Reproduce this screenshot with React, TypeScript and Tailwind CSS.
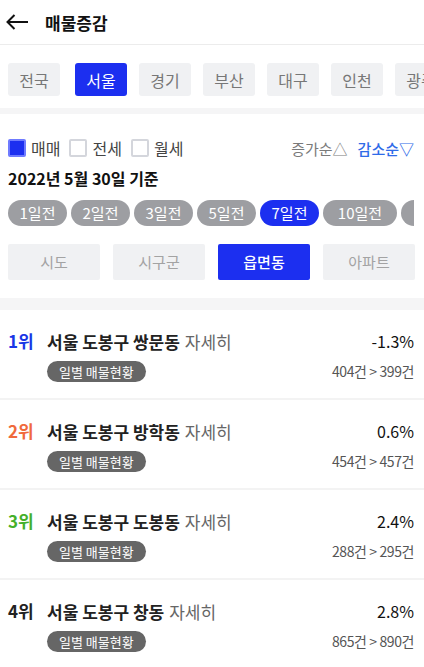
import React from "react";

const regions = ["전국", "서울", "경기", "부산", "대구", "인천", "광주"];
const days = ["1일전", "2일전", "3일전", "5일전", "7일전", "10일전", "14일전"];
const levels = ["시도", "시구군", "읍면동", "아파트"];

const items = [
  { rank: "1위", color: "text-[#1a37e6]", name: "서울 도봉구 쌍문동", pct: "-1.3%", cnt: "404건 > 399건" },
  { rank: "2위", color: "text-[#f06a3c]", name: "서울 도봉구 방학동", pct: "0.6%", cnt: "454건 > 457건" },
  { rank: "3위", color: "text-[#45b02b]", name: "서울 도봉구 도봉동", pct: "2.4%", cnt: "288건 > 295건" },
  { rank: "4위", color: "text-[#222222]", name: "서울 도봉구 창동", pct: "2.8%", cnt: "865건 > 890건" },
];

function Check({ checked, label }: { checked?: boolean; label: string }) {
  return (
    <div className="flex items-center gap-[5px]">
      <div
        className={
          checked
            ? "w-[18px] h-[18px] bg-[#1c2ff0] border-2 border-[#6f7bff] rounded-[2px]"
            : "w-[18px] h-[18px] bg-white border-2 border-[#d4d6dc] rounded-[2px]"
        }
      />
      <span className="text-[16px] text-[#444] leading-none">{label}</span>
    </div>
  );
}

export default function App() {
  return (
    <div
      className="w-[424px] h-[667px] overflow-hidden bg-white"
      style={{ fontFamily: '"Noto Sans CJK KR", "Noto Sans", sans-serif' }}
    >
      {/* header */}
      <div className="h-[45px] flex items-center border-b border-[#ececec]">
        <svg className="ml-[6px]" width="23" height="16" viewBox="0 0 23 16" fill="none">
          <path d="M22 8H1.5M8.5 1L1.5 8L8.5 15" stroke="#111" strokeWidth="2" />
        </svg>
        <span className="ml-[16px] text-[17px] font-bold text-[#111] leading-none">매물증감</span>
      </div>

      {/* regions */}
      <div className="pt-[18px] pb-[12px] pl-[8px] flex gap-[12px] overflow-hidden">
        {regions.map((r, i) => (
          <div
            key={r}
            className={
              (i === 0 ? "mr-[3px] " : "") +
              (i === 1
                ? "shrink-0 w-[52px] h-[33px] flex items-center justify-center rounded-[3px] bg-[#1c2ff0] text-white text-[16px]"
                : "shrink-0 w-[52px] h-[33px] flex items-center justify-center rounded-[3px] bg-[#f0f1f3] text-[#777] text-[16px]")
            }
          >
            {r}
          </div>
        ))}
      </div>
      <div className="h-[6px] bg-[#f5f5f6]" />

      {/* filters */}
      <div className="pt-[25px] pb-[18px]">
        <div className="flex items-center justify-between pl-[8px] pr-[10px] h-[18px]">
          <div className="flex items-center gap-[9px]">
            <Check checked label="매매" />
            <Check label="전세" />
            <Check label="월세" />
          </div>
          <div className="flex items-center gap-[10px] text-[15px] leading-none">
            <span className="text-[#7a7a7a]">증가순△</span>
            <span className="text-[#2f6be8] font-medium">감소순▽</span>
          </div>
        </div>
        <div className="mt-[10px] pl-[8px] h-[22px] flex items-center text-[16px] font-bold text-[#111]">
          2022년 5월 30일 기준
        </div>
        <div className="mt-[11px] ml-[8px] w-[406px] overflow-hidden flex gap-[4px]">
          {days.map((d, i) => (
            <div
              key={d}
              className={
                (i === 5 ? "w-[74px] " : i === 6 ? "w-[84px] " : "w-[59px] ") +
                (i === 4
                  ? "shrink-0 h-[26px] rounded-full bg-[#1c2ff0] text-white text-[15px] flex items-center justify-center"
                  : "shrink-0 h-[26px] rounded-full bg-[#9d9ea2] text-white text-[15px] flex items-center justify-center")
              }
            >
              {d}
            </div>
          ))}
        </div>
        <div className="mt-[18px] pl-[8px] pr-[9px] grid grid-cols-4 gap-[13px]">
          {levels.map((l, i) => (
            <div
              key={l}
              className={
                i === 2
                  ? "h-[36px] rounded-[2px] bg-[#1c2ff0] text-white text-[15px] font-medium flex items-center justify-center"
                  : "h-[36px] rounded-[2px] bg-[#f0f1f3] text-[#a3a3a3] text-[15px] flex items-center justify-center"
              }
            >
              {l}
            </div>
          ))}
        </div>
      </div>
      <div className="h-[12px] bg-[#f5f5f6]" />

      {/* list */}
      <div>
        {items.map((it) => (
          <div key={it.rank} className="h-[90px] border-b-2 border-[#f3f3f3] flex pl-[8px] pr-[10px] pt-[19px]">
            <div className={"w-[39px] h-[24px] flex items-center text-[17px] font-bold " + it.color}>{it.rank}</div>
            <div className="flex-1 flex flex-col">
              <div className="h-[24px] flex items-center text-[17px] leading-none">
                <span className="font-bold text-[#222]">{it.name}</span>
                <span className="ml-[5px] text-[#666]">자세히</span>
              </div>
              <div className="mt-[8px] self-start h-[21px] px-[12px] rounded-full bg-[#666] text-white text-[13px] flex items-center">
                일별 매물현황
              </div>
            </div>
            <div className="flex flex-col items-end">
              <div className="h-[24px] flex items-center text-[16px] text-[#111]">{it.pct}</div>
              <div className="mt-[6px] h-[24px] flex items-center text-[14px] text-[#555] tracking-[-0.4px]">{it.cnt}</div>
            </div>
          </div>
        ))}
      </div>
    </div>
  );
}
